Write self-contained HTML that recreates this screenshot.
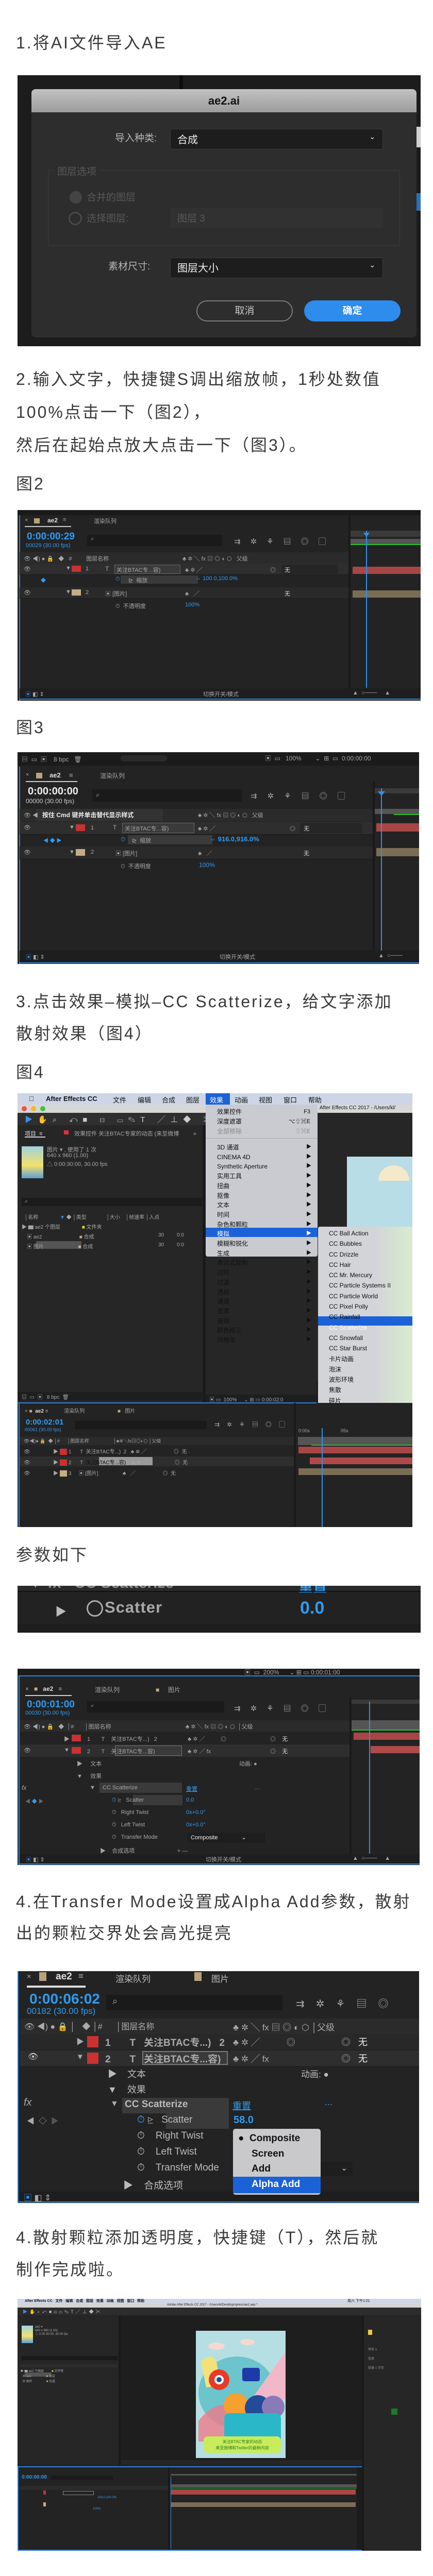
<!DOCTYPE html>
<html style="width:840px;height:5055px;overflow:hidden"><head><meta charset="utf-8">
<style>
*{margin:0;padding:0;box-sizing:border-box}
html,body{width:840px;height:5055px;overflow:hidden}
body{background:#fff;position:relative;font-family:"Liberation Sans","Noto Sans CJK SC",sans-serif}
.t{position:absolute;left:31px;font-size:32px;letter-spacing:3px;color:#3a3a3a;white-space:nowrap;line-height:40px;font-family:"Liberation Sans","Noto Sans CJK SC",sans-serif}
.f{position:absolute;left:34px;overflow:hidden;background:#232323}
.a{position:absolute;white-space:nowrap}
.g{color:#a6a6a6;font-size:11px}
.b{color:#2f9bf0}
.row{position:absolute;left:4px;right:0;border-bottom:1px solid #1b1b1b}
</style></head><body>

<div class="t" style="top:63px">1.将AI文件导入AE</div>

<!-- FIG 1 dialog -->
<div class="f" style="top:146px;width:782px;height:526px;background:#1c1c1c">
  <div class="a" style="left:314px;top:0;width:7px;height:30px;background:#0c0c0c"></div>
  <div class="a" style="left:774px;top:100px;width:8px;height:40px;background:#cfcfcf"></div>
  <div class="a" style="left:774px;top:229px;width:8px;height:34px;background:#2a6fc0"></div>
  <div class="a" style="left:27px;top:27px;width:747px;height:482px;background:#2d2d2d;border-radius:8px;overflow:hidden">
    <div class="a" style="left:0;top:0;width:747px;height:45px;background:linear-gradient(#c2c2c2,#9c9c9c);text-align:center;font:bold 22px 'Liberation Sans',sans-serif;line-height:45px;color:#111">ae2.ai</div>
    <div class="a" style="left:162px;top:80px;font-size:19px;color:#b5b5b5">导入种类:</div>
    <div class="a" style="left:269px;top:77px;width:413px;height:40px;background:#1d1d1d;border:1px solid #3c3c3c;border-radius:3px"></div>
    <div class="a" style="left:283px;top:82px;font-size:20px;color:#eee">合成</div>
    <div class="a" style="left:655px;top:83px;font-size:15px;color:#ddd">&#8964;</div>
    <div class="a" style="left:32px;top:157px;width:683px;height:147px;border:1px solid #3a3a3a;border-radius:3px"></div>
    <div class="a" style="left:44px;top:145px;font-size:19px;color:#585858;background:#2d2d2d;padding:0 6px">图层选项</div>
    <div class="a" style="left:74px;top:198px;width:24px;height:24px;border-radius:50%;background:#444"></div>
    <div class="a" style="left:107px;top:195px;font-size:19px;color:#585858">合并的图层</div>
    <div class="a" style="left:72px;top:238px;width:26px;height:26px;border-radius:50%;border:3px solid #484848"></div>
    <div class="a" style="left:107px;top:236px;font-size:19px;color:#585858">选择图层:</div>
    <div class="a" style="left:269px;top:230px;width:413px;height:40px;background:#313131"></div>
    <div class="a" style="left:283px;top:236px;font-size:19px;color:#575757">图层 3</div>
    <div class="a" style="left:149px;top:329px;font-size:19px;color:#b5b5b5">素材尺寸:</div>
    <div class="a" style="left:269px;top:327px;width:413px;height:40px;background:#1d1d1d;border:1px solid #3c3c3c;border-radius:3px"></div>
    <div class="a" style="left:283px;top:331px;font-size:20px;color:#eee">图层大小</div>
    <div class="a" style="left:655px;top:332px;font-size:15px;color:#ddd">&#8964;</div>
    <div class="a" style="left:320px;top:410px;width:187px;height:41px;border:2px solid #7a7a7a;border-radius:21px;text-align:center;line-height:37px;font-size:19px;color:#c8c8c8">取消</div>
    <div class="a" style="left:529px;top:410px;width:187px;height:41px;background:#2e8ced;border-radius:21px;text-align:center;line-height:41px;font-size:19px;font-weight:bold;color:#fff">确定</div>
  </div>
</div>

<div class="t" style="top:716px">2.输入文字，快捷键S调出缩放帧，1秒处数值</div>
<div class="t" style="top:780px">100%点击一下（图2），</div>
<div class="t" style="top:844px">然后在起始点放大点击一下（图3）。</div>
<div class="t" style="top:919px">图2</div>

<!-- FIG 2 -->
<div class="f" style="top:990px;width:782px;height:370px">
  <div class="a" style="left:0;top:0;width:782px;height:10px;background:#1a1a1a"></div>
  <div class="a" style="left:3px;top:10px;width:2px;height:360px;background:#2f7fd6"></div>
  <div class="a" style="left:3px;top:366px;width:779px;height:2px;background:#2f7fd6"></div>
  <div class="a g" style="left:14px;top:14px">×</div>
  <div class="a" style="left:32px;top:16px;width:11px;height:10px;background:#b9a27a"></div>
  <div class="a" style="left:58px;top:13px;font-size:12px;font-weight:bold;color:#ddd">ae2</div>
  <div class="a g" style="left:88px;top:13px">≡</div>
  <div class="a" style="left:14px;top:31px;width:90px;height:2px;background:#ccc"></div>
  <div class="a g" style="left:148px;top:13px">渲染队列</div>
  <div class="a b" style="left:18px;top:41px;font-size:19px;font-weight:bold">0:00:00:29</div>
  <div class="a b" style="left:16px;top:63px;font-size:11px">00029 (30.00 fps)</div>
  <div class="a" style="left:135px;top:48px;width:262px;height:22px;background:#1a1a1a"></div>
  <div class="a g" style="left:142px;top:50px">⌕</div>
  <div class="a" style="left:420px;top:50px;font-size:15px;color:#aaa;letter-spacing:19px">⇉✲⚘▤◎▢</div>
  <div class="a" style="left:4px;top:82px;width:638px;height:22px;background:#2b2b2b"></div>
  <div class="a g" style="left:12px;top:86px">👁 ◀) ● 🔒 &nbsp;&nbsp;◆ &nbsp;&nbsp;# &nbsp;&nbsp;&nbsp;&nbsp;&nbsp;&nbsp;&nbsp;&nbsp;图层名称</div>
  <div class="a g" style="left:320px;top:86px">♣ ✲ ╲ fx ▤ ◎ ◐ ⬡ &nbsp;&nbsp;父级</div>
  <div class="row" style="top:104px;height:22px;width:638px;background:#2e2e2e"></div>
  <div class="a g" style="left:12px;top:108px">👁</div>
  <div class="a g" style="left:93px;top:107px">▼</div>
  <div class="a" style="left:105px;top:108px;width:18px;height:12px;background:#c83232"></div>
  <div class="a g" style="left:132px;top:108px">1</div>
  <div class="a g" style="left:170px;top:107px;font-size:12px">T</div>
  <div class="a" style="left:188px;top:106px;width:128px;height:18px;border:1px solid #666;background:#3a3a3a"></div>
  <div class="a g" style="left:192px;top:108px">关注BTAC专...容)</div>
  <div class="a g" style="left:325px;top:108px">♣ ✲ ╱</div>
  <div class="a g" style="left:490px;top:108px">◎</div>
  <div class="a" style="left:512px;top:106px;width:110px;height:18px;background:#262626"></div>
  <div class="a g" style="left:518px;top:108px;color:#ddd">无</div>
  <div class="a" style="left:200px;top:127px;width:150px;height:16px;background:#3a3a3a"></div>
  <div class="a b" style="left:45px;top:128px;font-size:10px">◆</div>
  <div class="a g" style="left:190px;top:128px;color:#3aa0ff">⏱</div>
  <div class="a g" style="left:215px;top:128px">⊵ &nbsp;缩放</div>
  <div class="a b" style="left:345px;top:127px;font-size:11px">⇔ 100.0,100.0%</div>
  <div class="row" style="top:150px;height:22px;width:638px;background:#2a2a2a"></div>
  <div class="a g" style="left:12px;top:154px">👁</div>
  <div class="a g" style="left:93px;top:153px">▼</div>
  <div class="a" style="left:105px;top:154px;width:18px;height:12px;background:#c3ad85"></div>
  <div class="a g" style="left:132px;top:154px">2</div>
  <div class="a g" style="left:170px;top:154px">▣ [图片]</div>
  <div class="a g" style="left:325px;top:154px">♣ &nbsp;&nbsp;╱</div>
  <div class="a g" style="left:518px;top:154px;color:#ddd">无</div>
  <div class="a g" style="left:190px;top:178px">⏱ &nbsp;不透明度</div>
  <div class="a b" style="left:325px;top:178px;font-size:11px">100%</div>
  <div class="a" style="left:642px;top:10px;width:4px;height:340px;background:#1a1a1a"></div>
  <div class="a" style="left:646px;top:40px;width:136px;height:12px;background:#3a3a3a"></div>
  <div class="a" style="left:646px;top:56px;width:136px;height:10px;background:#555"></div>
  <div class="a" style="left:646px;top:66px;width:136px;height:2px;background:#2bbf2b"></div>
  <div class="a" style="left:650px;top:110px;width:132px;height:14px;background:#a84646"></div>
  <div class="a" style="left:650px;top:156px;width:132px;height:14px;background:#7a6d55"></div>
  <div class="a" style="left:676px;top:40px;width:2px;height:305px;background:#2f8ff0"></div>
  <div class="a" style="left:671px;top:44px;width:0;height:0;border:6px solid transparent;border-top:8px solid #2f8ff0"></div>
  <div class="a" style="left:4px;top:346px;width:778px;height:20px;background:#1e1e1e"></div>
  <div class="a g" style="left:15px;top:349px;color:#2f8ff0">▣ <span style="color:#aaa">◧ ⇕</span></div>
  <div class="a g" style="left:360px;top:349px">切换开关/模式</div>
  <div class="a g" style="left:650px;top:349px">▲ &nbsp;○─── &nbsp;&nbsp;&nbsp;&nbsp;▲</div>
</div>

<div class="t" style="top:1392px">图3</div>

<!-- FIG 3 -->
<div class="f" style="top:1460px;width:779px;height:411px">
  <div class="a" style="left:0;top:0;width:779px;height:26px;background:#1b1b1b"></div>
  <div class="a g" style="left:8px;top:5px;font-size:12px">▤ &nbsp;▭ &nbsp;▣ &nbsp;&nbsp;&nbsp;8 bpc &nbsp;&nbsp;🗑</div>
  <div class="a" style="left:200px;top:6px;width:90px;height:12px;background:#2a2a2a;border-radius:6px"></div>
  <div class="a g" style="left:480px;top:3px;font-size:12px">▣ &nbsp;▭ &nbsp;&nbsp;100% &nbsp;&nbsp;&nbsp;&nbsp;&nbsp;&nbsp;&nbsp;⌄ &nbsp;⊞ &nbsp;▭ &nbsp;0:00:00:00</div>
  <div class="a" style="left:3px;top:28px;width:2px;height:383px;background:#2f7fd6"></div>
  <div class="a" style="left:3px;top:408px;width:776px;height:2px;background:#2f7fd6"></div>
  <div class="a g" style="left:16px;top:38px">×</div>
  <div class="a" style="left:36px;top:40px;width:12px;height:11px;background:#b9a27a"></div>
  <div class="a" style="left:62px;top:37px;font-size:13px;font-weight:bold;color:#ddd">ae2</div>
  <div class="a g" style="left:100px;top:37px;font-size:13px">≡</div>
  <div class="a g" style="left:160px;top:37px;font-size:12px">渲染队列</div>
  <div class="a" style="left:16px;top:56px;width:100px;height:2px;background:#ccc"></div>
  <div class="a" style="left:20px;top:65px;font-size:20px;font-weight:bold;color:#eee">0:00:00:00</div>
  <div class="a" style="left:16px;top:88px;font-size:12px;color:#ccc">00000 (30.00 fps)</div>
  <div class="a" style="left:145px;top:72px;width:290px;height:24px;background:#1a1a1a"></div>
  <div class="a g" style="left:152px;top:75px;font-size:13px">⌕</div>
  <div class="a" style="left:452px;top:74px;font-size:15px;color:#aaa;letter-spacing:20px">⇉✲⚘▤◎▢</div>
  <div class="a" style="left:4px;top:110px;width:685px;height:24px;background:#2b2b2b"></div>
  <div class="a" style="left:36px;top:110px;width:246px;height:24px;background:#333"></div>
  <div class="a g" style="left:12px;top:114px">👁 ◀</div>
  <div class="a" style="left:48px;top:113px;font-size:12px;font-weight:bold;color:#eee">按住 Cmd 键并单击替代显示样式</div>
  <div class="a g" style="left:350px;top:114px">♣ ✲ ╲ fx ▤ ◎ ◐ ⬡ &nbsp;&nbsp;父级</div>
  <div class="row" style="top:135px;height:25px;width:685px;background:#2e2e2e"></div>
  <div class="a g" style="left:12px;top:140px">👁</div>
  <div class="a g" style="left:100px;top:140px">▼</div>
  <div class="a" style="left:113px;top:140px;width:18px;height:13px;background:#c83232"></div>
  <div class="a g" style="left:142px;top:141px">1</div>
  <div class="a g" style="left:185px;top:139px;font-size:12px">T</div>
  <div class="a" style="left:203px;top:137px;width:140px;height:20px;border:1px solid #666;background:#3a3a3a"></div>
  <div class="a g" style="left:208px;top:140px">关注BTAC专...容)</div>
  <div class="a g" style="left:350px;top:140px">♣ ✲ ╱</div>
  <div class="a g" style="left:528px;top:140px">◎</div>
  <div class="a" style="left:548px;top:138px;width:120px;height:19px;background:#262626"></div>
  <div class="a g" style="left:555px;top:140px;color:#ddd">无</div>
  <div class="a" style="left:214px;top:161px;width:164px;height:18px;background:#3a3a3a"></div>
  <div class="a b" style="left:50px;top:163px;font-size:10px">◀ ◆ ▶</div>
  <div class="a" style="left:200px;top:162px;font-size:12px;color:#3aa0ff">⏱</div>
  <div class="a g" style="left:222px;top:163px">⊵ &nbsp;缩放</div>
  <div class="a b" style="left:372px;top:161px;font-size:13px;font-weight:bold">⇔ 916.0,916.0%</div>
  <div class="row" style="top:183px;height:25px;width:685px;background:#2a2a2a"></div>
  <div class="a g" style="left:12px;top:188px">👁</div>
  <div class="a g" style="left:100px;top:188px">▼</div>
  <div class="a" style="left:113px;top:188px;width:18px;height:13px;background:#c3ad85"></div>
  <div class="a g" style="left:142px;top:188px">2</div>
  <div class="a g" style="left:190px;top:188px">▣ [图片]</div>
  <div class="a g" style="left:350px;top:188px">♣ &nbsp;&nbsp;╱</div>
  <div class="a g" style="left:555px;top:188px;color:#ddd">无</div>
  <div class="a g" style="left:200px;top:213px">⏱ &nbsp;不透明度</div>
  <div class="a b" style="left:352px;top:212px;font-size:12px">100%</div>
  <div class="a" style="left:689px;top:56px;width:4px;height:330px;background:#1a1a1a"></div>
  <div class="a" style="left:693px;top:70px;width:86px;height:10px;background:#3a3a3a"></div>
  <div class="a" style="left:693px;top:110px;width:86px;height:10px;background:#555"></div>
  <div class="a" style="left:730px;top:120px;width:49px;height:2px;background:#2bbf2b"></div>
  <div class="a" style="left:696px;top:138px;width:83px;height:16px;background:#a84646"></div>
  <div class="a" style="left:696px;top:186px;width:83px;height:16px;background:#7a6d55"></div>
  <div class="a" style="left:705px;top:70px;width:2px;height:315px;background:#2f8ff0"></div>
  <div class="a" style="left:699px;top:76px;width:0;height:0;border:7px solid transparent;border-top:9px solid #2f8ff0"></div>
  <div class="a" style="left:4px;top:385px;width:775px;height:22px;background:#1e1e1e"></div>
  <div class="a g" style="left:16px;top:389px;color:#2f8ff0">▣ <span style="color:#aaa">◧ ⇕</span></div>
  <div class="a g" style="left:392px;top:389px">切换开关/模式</div>
  <div class="a g" style="left:700px;top:389px">▲ &nbsp;○───</div>
</div>

<div class="t" style="top:1924px">3.点击效果–模拟–CC Scatterize，给文字添加</div>
<div class="t" style="top:1986px">散射效果（图4）</div>
<div class="t" style="top:2061px">图4</div>

<!-- FIG 4 -->
<div class="f" style="top:2122px;width:766px;height:842px;background:#262626">
  <div class="a" style="left:0;top:0;width:766px;height:22px;background:#cdd5e6"></div>
  <div class="a" style="left:22px;top:3px;font-size:13px;color:#111;font-weight:bold">&#63743;</div>
  <div class="a" style="left:55px;top:3px;font-size:13px;font-weight:bold;color:#111">After Effects CC</div>
  <div class="a" style="left:185px;top:3px;font-size:13px;color:#111">文件</div>
  <div class="a" style="left:233px;top:3px;font-size:13px;color:#111">编辑</div>
  <div class="a" style="left:280px;top:3px;font-size:13px;color:#111">合成</div>
  <div class="a" style="left:327px;top:3px;font-size:13px;color:#111">图层</div>
  <div class="a" style="left:365px;top:0;width:47px;height:22px;background:#1b62d8"></div>
  <div class="a" style="left:373px;top:3px;font-size:13px;color:#fff">效果</div>
  <div class="a" style="left:421px;top:3px;font-size:13px;color:#111">动画</div>
  <div class="a" style="left:468px;top:3px;font-size:13px;color:#111">视图</div>
  <div class="a" style="left:516px;top:3px;font-size:13px;color:#111">窗口</div>
  <div class="a" style="left:564px;top:3px;font-size:13px;color:#111">帮助</div>
  <div class="a" style="left:0;top:22px;width:365px;height:16px;background:#d7d7d7"></div>
  <div class="a" style="left:8px;top:25px;width:10px;height:10px;border-radius:50%;background:#f0524a"></div>
  <div class="a" style="left:26px;top:25px;width:10px;height:10px;border-radius:50%;background:#f5b82e"></div>
  <div class="a" style="left:44px;top:25px;width:10px;height:10px;border-radius:50%;background:#3ec43e"></div>
  <div class="a" style="left:0;top:38px;width:365px;height:24px;background:#2f2f2f"></div>
  <div class="a" style="left:14px;top:40px;font-size:15px;color:#ccc;letter-spacing:10px"><span style="color:#3a8fe8">▶</span>✋⌕ ↶■ ⊡ ▭✎T ╱⊥◆ ✂</div>
  <div class="a g" style="left:14px;top:70px;color:#ddd">项目 &nbsp;≡</div>
  <div class="a" style="left:14px;top:84px;width:40px;height:2px;background:#ccc"></div>
  <div class="a" style="left:90px;top:72px;width:9px;height:8px;background:#d33"></div>
  <div class="a g" style="left:110px;top:70px">效果控件 关注BTAC专家的动态 (来至微博 &nbsp;&nbsp;&nbsp;&nbsp;&nbsp;&nbsp;&nbsp;&nbsp;»</div>
  <div class="a" style="left:8px;top:103px;width:42px;height:62px;background:linear-gradient(#9fd3e0,#f5e06a 60%,#5aa0d8)"></div>
  <div class="a g" style="left:57px;top:101px">图片 ▾ , 使用了 1 次</div>
  <div class="a g" style="left:57px;top:115px">640 x 960 (1.00)</div>
  <div class="a g" style="left:57px;top:129px">△ 0:00:30:00, 30.00 fps</div>
  <div class="a" style="left:8px;top:203px;width:350px;height:16px;background:#1b1b1b"></div>
  <div class="a g" style="left:14px;top:204px">⌕</div>
  <div class="a g" style="left:14px;top:232px;font-size:10px">│名称 &nbsp;&nbsp;&nbsp;&nbsp;&nbsp;&nbsp;&nbsp;&nbsp;&nbsp;&nbsp;&nbsp;&nbsp;&nbsp;&nbsp;<span style="color:#2f8ff0">▼</span> ◆ │类型 &nbsp;&nbsp;&nbsp;&nbsp;&nbsp;&nbsp;&nbsp;&nbsp;&nbsp;&nbsp;&nbsp;&nbsp;&nbsp;│大小 &nbsp;&nbsp;&nbsp;│帧速率 │入点</div>
  <div class="a g" style="left:8px;top:251px;font-size:10px">▶ ▆ ae2 个图层 &nbsp;&nbsp;&nbsp;&nbsp;&nbsp;&nbsp;&nbsp;&nbsp;&nbsp;&nbsp;&nbsp;&nbsp;&nbsp;&nbsp;<span style="color:#f0d030">■</span> 文件夹</div>
  <div class="a g" style="left:18px;top:270px;font-size:10px">▣ ae2 &nbsp;&nbsp;&nbsp;&nbsp;&nbsp;&nbsp;&nbsp;&nbsp;&nbsp;&nbsp;&nbsp;&nbsp;&nbsp;&nbsp;&nbsp;&nbsp;&nbsp;&nbsp;&nbsp;&nbsp;&nbsp;&nbsp;&nbsp;&nbsp;&nbsp;<span style="color:#c3ad85">■</span> 合成</div>
  <div class="a" style="left:36px;top:287px;width:88px;height:15px;background:#555"></div>
  <div class="a g" style="left:18px;top:289px;font-size:10px">▣ 图片 &nbsp;&nbsp;&nbsp;&nbsp;&nbsp;&nbsp;&nbsp;&nbsp;&nbsp;&nbsp;&nbsp;&nbsp;&nbsp;&nbsp;&nbsp;&nbsp;&nbsp;&nbsp;&nbsp;&nbsp;&nbsp;&nbsp;&nbsp;<span style="color:#c3ad85">■</span> 合成</div>
  <div class="a g" style="left:273px;top:270px;font-size:10px">30 &nbsp;&nbsp;&nbsp;&nbsp;&nbsp;&nbsp;&nbsp;&nbsp;0:0</div>
  <div class="a g" style="left:273px;top:289px;font-size:10px">30 &nbsp;&nbsp;&nbsp;&nbsp;&nbsp;&nbsp;&nbsp;&nbsp;0:0</div>
  <div class="a" style="left:359px;top:62px;width:6px;height:540px;background:#1a1a1a"></div>
  <div class="a" style="left:0;top:580px;width:360px;height:16px;background:#1e1e1e"></div>
  <div class="a g" style="left:8px;top:581px;font-size:10px">▤ &nbsp;▭ &nbsp;▣ &nbsp;&nbsp;8 bpc &nbsp;🗑</div>
  <div class="a" style="left:582px;top:22px;width:184px;height:16px;background:#d7d7d7"></div>
  <div class="a" style="left:586px;top:23px;font-size:10px;color:#111">After Effects CC 2017 - /Users/kl/</div>
  <div class="a" style="left:639px;top:123px;width:127px;height:140px;background:#b9dde6"></div>
  <div class="a" style="left:700px;top:140px;width:60px;height:30px;border-radius:30px 30px 0 0;background:#f6e9c9"></div>
  <div class="a" style="left:580px;top:560px;width:186px;height:40px;background:linear-gradient(90deg,#1e1e1e 60%,#b9dde6)"></div>
  <div class="a" style="left:365px;top:585px;width:215px;height:16px;background:#1e1e1e"></div>
  <div class="a g" style="left:372px;top:586px;font-size:10px">▣ ▭ &nbsp;100% &nbsp;&nbsp;&nbsp;&nbsp;⌄ ⊞ ▭ 0:00:02:0</div>
  <div class="a" style="left:365px;top:22px;width:217px;height:295px;background:#c9cbd1;border-radius:0 0 4px 4px"></div>
  <div class="a" style="left:387px;top:27px;font-size:12px;color:#111;line-height:19px">效果控件<br>深度遮罩<br><span style="color:#8a8a8a">全部移除</span></div>
  <div class="a" style="left:520px;top:27px;font-size:11px;color:#111;line-height:19px;text-align:right;width:48px">F3<br>⌥⇧⌘E<br><span style="color:#8a8a8a">⇧⌘E</span></div>
  <div class="a" style="left:365px;top:87px;width:217px;height:1px;background:#aaa"></div>
  <div class="a" style="left:365px;top:261px;width:217px;height:18px;background:#1b62d8"></div>
  <div class="a" style="left:387px;top:96px;font-size:12px;color:#111;line-height:18.7px">3D 通道<br>CINEMA 4D<br>Synthetic Aperture<br>实用工具<br>扭曲<br>抠像<br>文本<br>时间<br>杂色和颗粒<br><span style="color:#fff">模拟</span><br>模糊和锐化<br>生成<br>表达式控制<br>过时<br>过渡<br>透视<br>通道<br>遮罩<br>音频<br>颜色校正<br>风格化</div>
  <div class="a" style="left:560px;top:96px;font-size:10px;color:#111;line-height:18.7px">▶<br>▶<br>▶<br>▶<br>▶<br>▶<br>▶<br>▶<br>▶<br><span style="color:#fff">▶</span><br>▶<br>▶<br>▶<br>▶<br>▶<br>▶<br>▶<br>▶<br>▶<br>▶<br>▶</div>
  <div class="a" style="left:583px;top:259px;width:183px;height:350px;background:linear-gradient(90deg,#d3d4d8 60%,#d8ecd0);border-radius:4px"></div>
  <div class="a" style="left:583px;top:433px;width:183px;height:18px;background:#1b62d8"></div>
  <div class="a" style="left:604px;top:262px;font-size:12px;color:#111;line-height:20.3px">CC Ball Action<br>CC Bubbles<br>CC Drizzle<br>CC Hair<br>CC Mr. Mercury<br>CC Particle Systems II<br>CC Particle World<br>CC Pixel Polly<br>CC Rainfall<br><span style="color:#fff">CC Scatterize</span><br>CC Snowfall<br>CC Star Burst<br>卡片动画<br>泡沫<br>波形环境<br>焦散<br>碎片<br>粒子运动场</div>
  <div class="a" style="left:0;top:601px;width:766px;height:241px;background:#232323"></div>
  <div class="a" style="left:2px;top:601px;width:2px;height:241px;background:#2f7fd6"></div>
  <div class="a" style="left:0;top:600px;width:580px;height:2px;background:#2f7fd6"></div>
  <div class="a g" style="left:14px;top:608px;font-size:10px">× <span style="color:#c3ad85">■</span> &nbsp;<b style="color:#ddd">ae2</b> ≡ &nbsp;&nbsp;&nbsp;&nbsp;&nbsp;&nbsp;&nbsp;&nbsp;&nbsp;&nbsp;渲染队列 &nbsp;&nbsp;&nbsp;&nbsp;&nbsp;&nbsp;&nbsp;&nbsp;&nbsp;&nbsp;&nbsp;&nbsp;&nbsp;&nbsp;&nbsp;&nbsp;&nbsp;&nbsp;&nbsp;&nbsp;&nbsp;&nbsp;<span style="color:#c3ad85">■</span> &nbsp;&nbsp;图片</div>
  <div class="a b" style="left:16px;top:630px;font-size:15px;font-weight:bold">0:00:02:01</div>
  <div class="a b" style="left:14px;top:648px;font-size:9px">00061 (30.00 fps)</div>
  <div class="a" style="left:112px;top:636px;width:255px;height:16px;background:#1a1a1a"></div>
  <div class="a" style="left:382px;top:634px;font-size:12px;color:#aaa;letter-spacing:14px">⇉✲⚘▤◎▢</div>
  <div class="a" style="left:4px;top:667px;width:534px;height:16px;background:#2b2b2b"></div>
  <div class="a g" style="left:12px;top:668px;font-size:9px">👁◀)● 🔒 &nbsp;◆ │# &nbsp;&nbsp;&nbsp;&nbsp;&nbsp;│图层名称 &nbsp;&nbsp;&nbsp;&nbsp;&nbsp;&nbsp;&nbsp;&nbsp;&nbsp;&nbsp;&nbsp;&nbsp;&nbsp;&nbsp;&nbsp;&nbsp;&nbsp;&nbsp;│♣✲╲fx▤◎◐⬡ │父级</div>
  <div class="a g" style="left:12px;top:687px;font-size:10px">👁 &nbsp;&nbsp;&nbsp;&nbsp;&nbsp;&nbsp;&nbsp;&nbsp;&nbsp;&nbsp;&nbsp;&nbsp;&nbsp;&nbsp;&nbsp;▶ <span style="color:#c83232">██</span> 1 &nbsp;&nbsp;&nbsp;&nbsp;&nbsp;T &nbsp;关注BTAC专...) &nbsp;2 &nbsp;&nbsp;♣ ✲ ╱ &nbsp;&nbsp;&nbsp;&nbsp;&nbsp;&nbsp;&nbsp;&nbsp;&nbsp;&nbsp;&nbsp;&nbsp;&nbsp;&nbsp;&nbsp;&nbsp;&nbsp;&nbsp;◎ &nbsp;无</div>
  <div class="a" style="left:4px;top:705px;width:534px;height:19px;background:#2e2e2e"></div>
  <div class="a" style="left:158px;top:706px;width:104px;height:16px;background:#9a9a9a"></div>
  <div class="a g" style="left:12px;top:708px;font-size:10px">👁 &nbsp;&nbsp;&nbsp;&nbsp;&nbsp;&nbsp;&nbsp;&nbsp;&nbsp;&nbsp;&nbsp;&nbsp;&nbsp;&nbsp;&nbsp;▶ <span style="color:#c83232">██</span> 2 &nbsp;&nbsp;&nbsp;&nbsp;&nbsp;T &nbsp;<span style="color:#111">关注BTAC专...容)</span> &nbsp;&nbsp;&nbsp;♣ ✲ ╱ &nbsp;&nbsp;&nbsp;&nbsp;&nbsp;&nbsp;&nbsp;&nbsp;&nbsp;&nbsp;&nbsp;&nbsp;&nbsp;&nbsp;&nbsp;&nbsp;&nbsp;&nbsp;◎ &nbsp;无</div>
  <div class="a g" style="left:12px;top:729px;font-size:10px">👁 &nbsp;&nbsp;&nbsp;&nbsp;&nbsp;&nbsp;&nbsp;&nbsp;&nbsp;&nbsp;&nbsp;&nbsp;&nbsp;&nbsp;&nbsp;▶ <span style="color:#c3ad85">██</span> 3 &nbsp;&nbsp;&nbsp;&nbsp;▣ [图片] &nbsp;&nbsp;&nbsp;&nbsp;&nbsp;&nbsp;&nbsp;&nbsp;&nbsp;&nbsp;&nbsp;&nbsp;&nbsp;&nbsp;&nbsp;&nbsp;♣ &nbsp;&nbsp;╱ &nbsp;&nbsp;&nbsp;&nbsp;&nbsp;&nbsp;&nbsp;&nbsp;&nbsp;&nbsp;&nbsp;&nbsp;&nbsp;&nbsp;&nbsp;&nbsp;&nbsp;&nbsp;◎ &nbsp;无</div>
  <div class="a" style="left:536px;top:601px;width:4px;height:241px;background:#1a1a1a"></div>
  <div class="a g" style="left:545px;top:650px;font-size:9px">0:00s &nbsp;&nbsp;&nbsp;&nbsp;&nbsp;&nbsp;&nbsp;&nbsp;&nbsp;&nbsp;&nbsp;&nbsp;&nbsp;&nbsp;&nbsp;&nbsp;&nbsp;&nbsp;&nbsp;&nbsp;&nbsp;&nbsp;&nbsp;05s</div>
  <div class="a" style="left:544px;top:667px;width:222px;height:16px;background:#555"></div>
  <div class="a" style="left:570px;top:682px;width:196px;height:2px;background:#2bbf2b"></div>
  <div class="a" style="left:545px;top:686px;width:221px;height:13px;background:#a84646"></div>
  <div class="a" style="left:567px;top:707px;width:199px;height:13px;background:#b04a4a"></div>
  <div class="a" style="left:545px;top:728px;width:221px;height:13px;background:#7a6d55"></div>
  <div class="a" style="left:590px;top:650px;width:2px;height:192px;background:#2f8ff0"></div>
</div>

<div class="t" style="top:2998px">参数如下</div>

<div class="f" style="top:3078px;width:782px;height:91px;background:#222">
  <div class="a" style="left:0;top:0;width:782px;height:10px;background:#2a2a2a"></div>
  <div class="a" style="left:20px;top:-22px;font-size:30px;font-weight:bold;color:#8a8a8a">▼ fx &nbsp;&nbsp;CC Scatterize</div>
  <div class="a b" style="left:545px;top:-20px;font-size:28px;font-weight:bold">重置</div>
  <div class="a" style="left:0;top:10px;width:782px;height:2px;background:#111"></div>
  <div class="a" style="left:73px;top:33px;font-size:22px;color:#bbb">▶</div>
  <div class="a" style="left:134px;top:28px;width:32px;height:32px;border:3px solid #aaa;border-radius:50%"></div>
  <div class="a" style="left:169px;top:24px;font-size:31px;font-weight:bold;color:#a8a8a8;letter-spacing:1px">Scatter</div>
  <div class="a b" style="left:548px;top:24px;font-size:34px;font-weight:bold">0.0</div>
  <div class="a" style="left:0;top:74px;width:782px;height:17px;background:#1d1d1d"></div>
</div>

<!-- FIG 5 -->
<div class="f" style="top:3239px;width:780px;height:381px">
  <div class="a" style="left:0;top:0;width:780px;height:12px;background:#1b1b1b"></div>
  <div class="a g" style="left:440px;top:-2px;font-size:12px">▣ &nbsp;▭ &nbsp;200% &nbsp;&nbsp;&nbsp;&nbsp;&nbsp;⌄ ⊞ ▭ 0:00:01:00</div>
  <div class="a" style="left:2px;top:14px;width:2px;height:367px;background:#2f7fd6"></div>
  <div class="a" style="left:2px;top:13px;width:778px;height:2px;background:#2f7fd6"></div>
  <div class="a" style="left:2px;top:378px;width:778px;height:2px;background:#2f7fd6"></div>
  <div class="a g" style="left:15px;top:32px;font-size:12px">× &nbsp;&nbsp;<span style="color:#c3ad85">■</span> &nbsp;&nbsp;<b style="color:#ddd">ae2</b> &nbsp;&nbsp;≡</div>
  <div class="a g" style="left:150px;top:32px;font-size:12px">渲染队列</div>
  <div class="a g" style="left:268px;top:32px;font-size:12px"><span style="color:#c3ad85">■</span> &nbsp;&nbsp;&nbsp;&nbsp;图片</div>
  <div class="a" style="left:15px;top:51px;width:90px;height:2px;background:#ccc"></div>
  <div class="a b" style="left:18px;top:59px;font-size:19px;font-weight:bold">0:00:01:00</div>
  <div class="a b" style="left:15px;top:80px;font-size:11px">00030 (30.00 fps)</div>
  <div class="a" style="left:135px;top:63px;width:266px;height:22px;background:#1a1a1a"></div>
  <div class="a g" style="left:142px;top:66px">⌕</div>
  <div class="a" style="left:420px;top:66px;font-size:15px;color:#aaa;letter-spacing:19px">⇉✲⚘▤◎▢</div>
  <div class="a" style="left:4px;top:100px;width:640px;height:22px;background:#2b2b2b"></div>
  <div class="a g" style="left:12px;top:104px">👁 ◀) ● 🔒 &nbsp;&nbsp;◆ &nbsp;│# &nbsp;&nbsp;&nbsp;&nbsp;&nbsp;&nbsp;│图层名称</div>
  <div class="a g" style="left:326px;top:104px">♣ ✲ ╲ fx ▤ ◎ ◐ ⬡ &nbsp;│父级</div>
  <div class="a" style="left:4px;top:147px;width:640px;height:24px;background:#2e2e2e"></div>
  <div class="a" style="left:105px;top:128px;width:18px;height:13px;background:#c83232"></div>
  <div class="a" style="left:105px;top:152px;width:18px;height:13px;background:#c83232"></div>
  <div class="a g" style="left:90px;top:128px">▶</div>
  <div class="a g" style="left:135px;top:128px">1 &nbsp;&nbsp;&nbsp;&nbsp;&nbsp;&nbsp;T &nbsp;&nbsp;&nbsp;关注BTAC专...) &nbsp;&nbsp;2</div>
  <div class="a g" style="left:12px;top:152px">👁</div>
  <div class="a g" style="left:90px;top:152px">▼</div>
  <div class="a" style="left:189px;top:149px;width:130px;height:20px;border:1px solid #777;background:#3a3a3a"></div>
  <div class="a g" style="left:135px;top:152px">2 &nbsp;&nbsp;&nbsp;&nbsp;&nbsp;&nbsp;T &nbsp;&nbsp;&nbsp;关注BTAC专...容)</div>
  <div class="a g" style="left:330px;top:128px">♣ ✲ ╱ &nbsp;&nbsp;&nbsp;&nbsp;&nbsp;&nbsp;&nbsp;&nbsp;&nbsp;◎</div>
  <div class="a g" style="left:330px;top:152px">♣ ✲ ╱ fx</div>
  <div class="a g" style="left:490px;top:128px">◎ &nbsp;&nbsp;&nbsp;<span style="color:#ddd">无</span></div>
  <div class="a g" style="left:490px;top:152px">◎ &nbsp;&nbsp;&nbsp;<span style="color:#ddd">无</span></div>
  <div class="a g" style="left:115px;top:176px">▶ &nbsp;&nbsp;&nbsp;&nbsp;文本</div>
  <div class="a g" style="left:430px;top:176px">动画: ●</div>
  <div class="a g" style="left:115px;top:200px">▼ &nbsp;&nbsp;&nbsp;&nbsp;效果</div>
  <div class="a g" style="left:8px;top:224px;font-style:italic;font-size:12px">fx</div>
  <div class="a g" style="left:140px;top:225px">▼</div>
  <div class="a" style="left:159px;top:221px;width:160px;height:20px;background:#3a3a3a"></div>
  <div class="a g" style="left:165px;top:225px">CC Scatterize</div>
  <div class="a b" style="left:327px;top:225px;font-size:11px;text-decoration:underline">重置</div>
  <div class="a b" style="left:460px;top:225px;font-size:11px">...</div>
  <div class="a b" style="left:15px;top:249px;font-size:10px"><span style="color:#666">◀</span> ◆ <span style="color:#666">▶</span></div>
  <div class="a" style="left:224px;top:245px;width:96px;height:20px;background:#3a3a3a"></div>
  <div class="a g" style="left:183px;top:249px"><span style="color:#3aa0ff">⏱</span> ⊵ &nbsp;&nbsp;Scatter</div>
  <div class="a b" style="left:327px;top:249px;font-size:11px">0.0</div>
  <div class="a g" style="left:183px;top:273px">⏱ &nbsp;&nbsp;Right Twist</div>
  <div class="a b" style="left:327px;top:273px;font-size:11px">0x+0.0°</div>
  <div class="a g" style="left:183px;top:297px">⏱ &nbsp;&nbsp;Left Twist</div>
  <div class="a b" style="left:327px;top:297px;font-size:11px">0x+0.0°</div>
  <div class="a g" style="left:183px;top:321px">⏱ &nbsp;&nbsp;Transfer Mode</div>
  <div class="a" style="left:330px;top:318px;width:150px;height:20px;background:#1e1e1e"></div>
  <div class="a" style="left:336px;top:321px;font-size:11px;color:#eee">Composite &nbsp;&nbsp;&nbsp;&nbsp;&nbsp;&nbsp;&nbsp;&nbsp;&nbsp;&nbsp;&nbsp;&nbsp;&nbsp;&nbsp;⌄</div>
  <div class="a g" style="left:160px;top:345px">▶ &nbsp;&nbsp;&nbsp;合成选项 &nbsp;&nbsp;&nbsp;&nbsp;&nbsp;&nbsp;&nbsp;&nbsp;&nbsp;&nbsp;&nbsp;&nbsp;&nbsp;&nbsp;&nbsp;&nbsp;&nbsp;&nbsp;&nbsp;&nbsp;&nbsp;&nbsp;&nbsp;&nbsp;&nbsp;&nbsp;+ —</div>
  <div class="a" style="left:644px;top:55px;width:4px;height:305px;background:#1a1a1a"></div>
  <div class="a" style="left:648px;top:60px;width:132px;height:8px;background:#3a3a3a"></div>
  <div class="a" style="left:648px;top:100px;width:132px;height:18px;background:#555"></div>
  <div class="a" style="left:648px;top:118px;width:132px;height:2px;background:#2bbf2b"></div>
  <div class="a" style="left:652px;top:124px;width:128px;height:14px;background:#a84646"></div>
  <div class="a" style="left:685px;top:150px;width:95px;height:14px;background:#b04a4a"></div>
  <div class="a" style="left:682px;top:64px;width:2px;height:295px;background:#2f8ff0"></div>
  <div class="a" style="left:4px;top:360px;width:776px;height:18px;background:#1e1e1e"></div>
  <div class="a g" style="left:16px;top:362px;color:#2f8ff0">▣ <span style="color:#aaa">◧ ⇕</span></div>
  <div class="a g" style="left:365px;top:362px">切换开关/模式</div>
  <div class="a g" style="left:650px;top:362px">▲ &nbsp;○─── &nbsp;&nbsp;&nbsp;&nbsp;▲</div>
</div>

<div class="t" style="top:3671px">4.在Transfer Mode设置成Alpha Add参数，散射</div>
<div class="t" style="top:3732px">出的颗粒交界处会高光提亮</div>

<!-- FIG 6 -->
<div class="f" style="top:3826px;width:779px;height:450px">
  <div class="a" style="left:0;top:0;width:2px;height:450px;background:#2f7fd6"></div>
  <div class="a" style="left:0;top:447px;width:779px;height:2px;background:#2f7fd6"></div>
  <div class="a" style="left:18px;top:2px;font-size:15px;color:#aaa">×</div>
  <div class="a" style="left:42px;top:2px;width:14px;height:17px;background:#b9a27a"></div>
  <div class="a" style="left:74px;top:0px;font-size:19px;font-weight:bold;color:#ddd">ae2</div>
  <div class="a" style="left:118px;top:0px;font-size:17px;color:#aaa">≡</div>
  <div class="a" style="left:190px;top:1px;font-size:17px;color:#bbb">渲染队列</div>
  <div class="a" style="left:343px;top:2px;width:14px;height:17px;background:#b9a27a"></div>
  <div class="a" style="left:376px;top:1px;font-size:17px;color:#bbb">图片</div>
  <div class="a" style="left:18px;top:28px;width:114px;height:4px;background:#ddd"></div>
  <div class="a b" style="left:23px;top:38px;font-size:28px;font-weight:bold">0:00:06:02</div>
  <div class="a b" style="left:18px;top:68px;font-size:17px">00182 (30.00 fps)</div>
  <div class="a" style="left:172px;top:46px;width:342px;height:30px;background:#1a1a1a"></div>
  <div class="a" style="left:184px;top:48px;font-size:18px;color:#aaa">⌕</div>
  <div class="a" style="left:540px;top:47px;font-size:20px;color:#aaa;letter-spacing:22px">⇉✲⚘▤◎</div>
  <div class="a" style="left:4px;top:92px;width:775px;height:30px;background:#2b2b2b"></div>
  <div class="a" style="left:13px;top:94px;font-size:16px;color:#aaa">👁 ◀) ● 🔒 │ &nbsp;&nbsp;◆ │# &nbsp;&nbsp;&nbsp;&nbsp;&nbsp;│图层名称</div>
  <div class="a" style="left:418px;top:95px;font-size:17px;color:#aaa">♣ ✲ ╲ fx ▤ ◎ ◐ ⬡ │父级</div>
  <div class="a" style="left:4px;top:122px;width:775px;height:30px;background:#282828"></div>
  <div class="a" style="left:4px;top:154px;width:775px;height:30px;background:#2e2e2e"></div>
  <div class="a" style="left:135px;top:126px;width:22px;height:22px;background:#c83232"></div>
  <div class="a" style="left:135px;top:158px;width:22px;height:22px;background:#c83232"></div>
  <div class="a" style="left:114px;top:126px;font-size:15px;color:#aaa">▶</div>
  <div class="a" style="left:114px;top:158px;font-size:15px;color:#aaa">▼</div>
  <div class="a" style="left:20px;top:156px;font-size:16px;color:#ccc">👁</div>
  <div class="a" style="left:170px;top:124px;font-size:19px;font-weight:bold;color:#aaa">1 &nbsp;&nbsp;&nbsp;&nbsp;&nbsp;&nbsp;T &nbsp;&nbsp;关注BTAC专...) &nbsp;&nbsp;2</div>
  <div class="a" style="left:242px;top:155px;width:166px;height:27px;border:2px solid #777;background:#3a3a3a"></div>
  <div class="a" style="left:170px;top:156px;font-size:19px;font-weight:bold;color:#aaa">2 &nbsp;&nbsp;&nbsp;&nbsp;&nbsp;&nbsp;T &nbsp;&nbsp;关注BTAC专...容)</div>
  <div class="a" style="left:418px;top:124px;font-size:17px;color:#aaa">♣ ✲ ╱ &nbsp;&nbsp;&nbsp;&nbsp;&nbsp;&nbsp;&nbsp;&nbsp;&nbsp;&nbsp;◎</div>
  <div class="a" style="left:418px;top:156px;font-size:17px;color:#aaa">♣ ✲ ╱ fx</div>
  <div class="a" style="left:628px;top:124px;font-size:18px;color:#aaa">◎ &nbsp;&nbsp;<span style="color:#eee">无</span></div>
  <div class="a" style="left:628px;top:156px;font-size:18px;color:#aaa">◎ &nbsp;&nbsp;<span style="color:#eee">无</span></div>
  <div class="a" style="left:175px;top:186px;font-size:18px;color:#bbb">▶ &nbsp;&nbsp;&nbsp;文本</div>
  <div class="a" style="left:550px;top:186px;font-size:17px;color:#bbb">动画: ●</div>
  <div class="a" style="left:175px;top:216px;font-size:18px;color:#bbb">▼ &nbsp;&nbsp;&nbsp;效果</div>
  <div class="a" style="left:12px;top:244px;font-size:20px;font-style:italic;color:#aaa">fx</div>
  <div class="a" style="left:203px;top:246px;width:207px;height:30px;background:#3a3a3a"></div>
  <div class="a" style="left:180px;top:249px;font-size:16px;color:#aaa">▼</div>
  <div class="a" style="left:208px;top:248px;font-size:19px;color:#bbb;font-weight:bold">CC Scatterize</div>
  <div class="a b" style="left:417px;top:248px;font-size:18px;text-decoration:underline">重置</div>
  <div class="a b" style="left:596px;top:244px;font-size:18px">...</div>
  <div class="a" style="left:18px;top:280px;font-size:15px;color:#aaa">◀ &nbsp;◇ &nbsp;<span style="color:#555">▶</span></div>
  <div class="a" style="left:288px;top:276px;width:122px;height:30px;background:#3a3a3a"></div>
  <div class="a" style="left:232px;top:278px;font-size:19px;color:#bbb"><span style="color:#3aa0ff">⏱</span> ⊵ &nbsp;&nbsp;Scatter</div>
  <div class="a b" style="left:419px;top:278px;font-size:20px;font-weight:bold">58.0</div>
  <div class="a" style="left:232px;top:309px;font-size:19px;color:#bbb">⏱ &nbsp;&nbsp;&nbsp;Right Twist</div>
  <div class="a" style="left:232px;top:340px;font-size:19px;color:#bbb">⏱ &nbsp;&nbsp;&nbsp;Left Twist</div>
  <div class="a" style="left:232px;top:371px;font-size:19px;color:#bbb">⏱ &nbsp;&nbsp;&nbsp;Transfer Mode</div>
  <div class="a" style="left:580px;top:370px;width:70px;height:28px;background:#1e1e1e;color:#ccc;font-size:15px;text-align:right;padding-right:10px;line-height:26px">⌄</div>
  <div class="a" style="left:205px;top:401px;font-size:19px;color:#bbb">▶ &nbsp;&nbsp;&nbsp;合成选项</div>
  <div class="a" style="left:4px;top:428px;width:775px;height:19px;background:#1e1e1e"></div>
  <div class="a" style="left:12px;top:426px;font-size:16px;color:#2f8ff0">▣ <span style="color:#aaa">◧ ⇕</span></div>
  <div class="a" style="left:418px;top:306px;width:170px;height:128px;background:#c9c9cc;border-radius:5px"></div>
  <div class="a" style="left:418px;top:399px;width:170px;height:32px;background:#1b62d8"></div>
  <div class="a" style="left:428px;top:310px;font-size:19px;color:#111;line-height:29.5px;font-weight:bold">● &nbsp;Composite<br><span style="padding-left:26px">Screen</span><br><span style="padding-left:26px">Add</span><br><span style="padding-left:26px;color:#fff">Alpha Add</span></div>
</div>

<div class="t" style="top:4323px">4.散射颗粒添加透明度，快捷键（T），然后就</div>
<div class="t" style="top:4385px">制作完成啦。</div>

<!-- FIG 7 -->
<div class="f" style="top:4462px;width:783px;height:489px;background:#232323">
  <div class="a" style="left:0;top:0;width:783px;height:10px;background:#cfd6e6"></div>
  <div class="a" style="left:14px;top:0;font-size:7px;color:#111;font-weight:bold;line-height:10px">After Effects CC &nbsp;&nbsp;文件 &nbsp;&nbsp;编辑 &nbsp;&nbsp;合成 &nbsp;&nbsp;图层 &nbsp;&nbsp;效果 &nbsp;&nbsp;动画 &nbsp;&nbsp;视图 &nbsp;&nbsp;窗口 &nbsp;&nbsp;帮助</div>
  <div class="a" style="left:640px;top:0;font-size:7px;color:#111;line-height:10px">周六 下午1:21</div>
  <div class="a" style="left:0;top:10px;width:783px;height:7px;background:#d4d4d4"></div>
  <div class="a" style="left:290px;top:9px;font-size:6px;color:#222">Adobe After Effects CC 2017 - /Users/kl/Desktop/xpress/ae2.aep *</div>
  <div class="a" style="left:0;top:17px;width:783px;height:15px;background:#2c2c2c"></div>
  <div class="a" style="left:10px;top:18px;font-size:9px;color:#bbb;letter-spacing:4px"><span style="color:#3a8fe8">▶</span>✋⌕↶■⊡▭✎T╱⊥◆✂</div>
  <div class="a" style="left:0;top:33px;width:196px;height:288px;background:#262626"></div>
  <div class="a" style="left:8px;top:52px;width:22px;height:34px;background:linear-gradient(#9fd3e0,#f5e06a 60%,#5aa0d8)"></div>
  <div class="a" style="left:34px;top:52px;font-size:6px;color:#aaa;line-height:7px">ae2 ▾<br>640 x 960 (1.00)<br>△ 0:00:30:00, 30.00 fps</div>
  <div class="a" style="left:8px;top:111px;width:186px;height:8px;background:#1a1a1a"></div>
  <div class="a" style="left:4px;top:127px;width:190px;height:6px;background:#2d2d2d"></div>
  <div class="a" style="left:14px;top:143px;width:52px;height:8px;background:#555"></div>
  <div class="a" style="left:6px;top:136px;font-size:6px;color:#aaa;line-height:10px">▶ ▆ ae2 个图层 &nbsp;&nbsp;&nbsp;&nbsp;&nbsp;&nbsp;&nbsp;&nbsp;<span style="color:#f0d030">■</span> 文件夹<br>&nbsp;&nbsp;▣ ae2 &nbsp;&nbsp;&nbsp;&nbsp;&nbsp;&nbsp;&nbsp;&nbsp;&nbsp;&nbsp;&nbsp;&nbsp;&nbsp;&nbsp;&nbsp;&nbsp;<span style="color:#c3ad85">■</span> 合成<br>&nbsp;&nbsp;▣ 图片 &nbsp;&nbsp;&nbsp;&nbsp;&nbsp;&nbsp;&nbsp;&nbsp;&nbsp;&nbsp;&nbsp;&nbsp;&nbsp;&nbsp;&nbsp;<span style="color:#c3ad85">■</span> 合成</div>
  <div class="a" style="left:196px;top:33px;width:4px;height:290px;background:#1a1a1a"></div>
  <div class="a" style="left:200px;top:33px;width:468px;height:288px;background:#1e1e1e"></div>
  <div class="a" style="left:668px;top:33px;width:4px;height:456px;background:#1a1a1a"></div>
  <div class="a" style="left:672px;top:33px;width:111px;height:456px;background:#262626"></div>
  <div class="a" style="left:680px;top:60px;width:8px;height:10px;background:#edc84a"></div>
  <div class="a" style="left:725px;top:213px;width:12px;height:12px;background:#1d7a2a"></div>
  <div class="a" style="left:680px;top:95px;font-size:6px;color:#999;line-height:9px">预览 ≡<br><br>信息<br><br>段落 ≡ 字符</div>
  <svg class="a" style="left:346px;top:62px" width="174" height="247" viewBox="0 0 174 247">
    <rect width="174" height="247" fill="#b6dfe4"/>
    <ellipse cx="80" cy="120" rx="75" ry="70" fill="#6cc4cc"/>
    <path d="M174 40 L110 130 L140 175 L174 130Z" fill="#f0b8c8"/>
    <path d="M10 60 Q30 40 40 60 Q50 110 20 110Z" fill="#f2e27a"/>
    <ellipse cx="45" cy="95" rx="20" ry="20" fill="#e83a2a"/>
    <circle cx="45" cy="95" r="9" fill="#fff"/><circle cx="45" cy="95" r="5" fill="#1d4aa0"/>
    <rect x="90" y="72" width="34" height="26" rx="4" fill="#1d3aa8"/>
    <path d="M5 175 Q40 130 80 150 L80 215 L5 215Z" fill="#f07a8a" opacity=".8"/>
    <circle cx="78" cy="145" r="24" fill="#f5a030"/>
    <circle cx="120" cy="150" r="25" fill="#244a9a"/>
    <circle cx="150" cy="148" r="22" fill="#8b7ab8"/>
    <rect x="55" y="160" width="110" height="60" rx="10" fill="#2ab8c8"/>
    <rect x="15" y="205" width="150" height="32" rx="8" fill="#c8ec5a"/>
    <text x="90" y="218" font-size="8" text-anchor="middle" fill="#2a7a2a" font-family="Liberation Sans,Noto Sans CJK SC,sans-serif">关注BTAC专家的动态</text>
    <text x="90" y="230" font-size="8" text-anchor="middle" fill="#2a7a2a" font-family="Liberation Sans,Noto Sans CJK SC,sans-serif">来至微博和Twitter的最新内容</text>
    <ellipse cx="40" cy="30" rx="16" ry="7" fill="#f6d8d0"/>
    <ellipse cx="100" cy="22" rx="14" ry="6" fill="#f6d8d0"/>
  </svg>
  <div class="a" style="left:200px;top:313px;width:468px;height:8px;background:#262626"></div>
  <div class="a" style="left:0;top:325px;width:668px;height:164px;background:#232323;border:2px solid #2f7fd6"></div>
  <div class="a b" style="left:8px;top:341px;font-size:10px;font-weight:bold">0:00:00:00</div>
  <div class="a" style="left:65px;top:343px;width:120px;height:8px;background:#1a1a1a"></div>
  <div class="a" style="left:4px;top:363px;width:290px;height:8px;background:#2b2b2b"></div>
  <div class="a" style="left:88px;top:373px;width:60px;height:8px;border:1px solid #888"></div>
  <div class="a" style="left:50px;top:372px;width:5px;height:8px;background:#c83232"></div>
  <div class="a" style="left:50px;top:395px;width:5px;height:8px;background:#c3ad85"></div>
  <div class="a b" style="left:155px;top:383px;font-size:6px">100.0,100.0%</div>
  <div class="a b" style="left:146px;top:405px;font-size:6px">100%</div>
  <div class="a" style="left:292px;top:327px;width:3px;height:160px;background:#1a1a1a"></div>
  <div class="a" style="left:297px;top:340px;width:362px;height:3px;background:#555"></div>
  <div class="a" style="left:297px;top:360px;width:362px;height:6px;background:#555"></div>
  <div class="a" style="left:297px;top:367px;width:362px;height:1px;background:#2bbf2b"></div>
  <div class="a" style="left:297px;top:370px;width:359px;height:10px;background:#a84646"></div>
  <div class="a" style="left:297px;top:395px;width:359px;height:9px;background:#7a6d55"></div>
  <div class="a" style="left:297px;top:345px;width:1px;height:140px;background:#2f8ff0"></div>
  <div class="a" style="left:658px;top:327px;width:10px;height:160px;background:#1c1c1c"></div>
</div>

</body></html>
